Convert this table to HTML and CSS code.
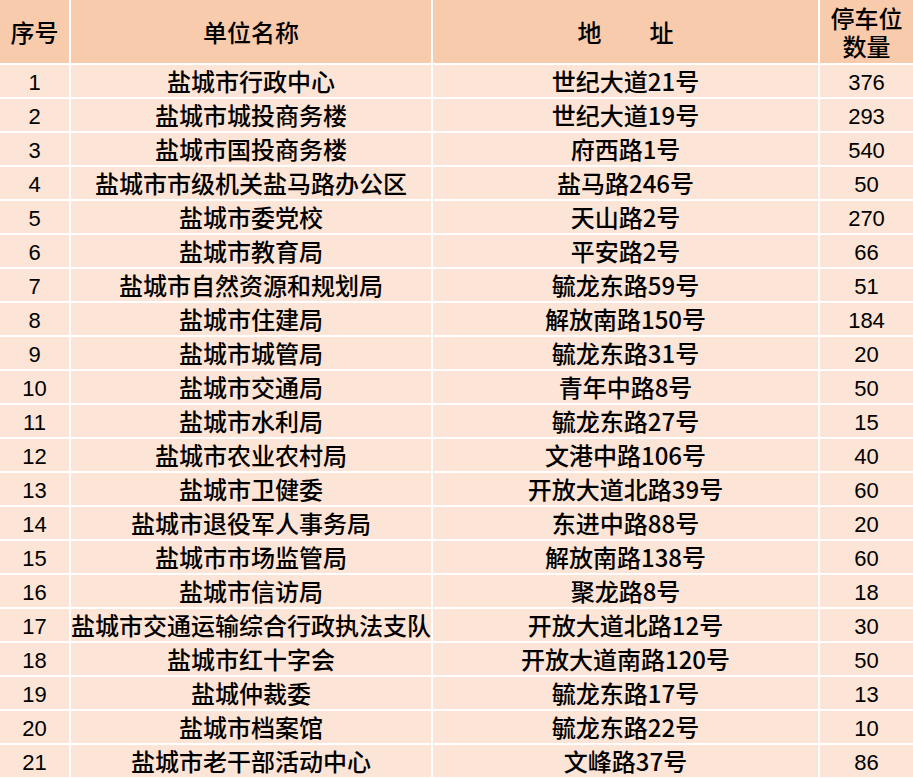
FILE: index.html
```html
<!DOCTYPE html>
<html lang="zh-CN">
<head>
<meta charset="utf-8">
<title>停车位</title>
<link rel="stylesheet" href="styles.css">
</head>
<body>
<table class="park">
<colgroup>
<col class="c1"><col class="c2"><col class="c3"><col class="c4">
</colgroup>
<thead>
<tr><th>序号</th><th>单位名称</th><th>地&emsp;&emsp;址</th><th class="two"><div>停车位</div><div>数量</div></th></tr>
</thead>
<tbody>
<tr><td class="n">1</td><td>盐城市行政中心</td><td>世纪大道21号</td><td class="n">376</td></tr>
<tr><td class="n">2</td><td>盐城市城投商务楼</td><td>世纪大道19号</td><td class="n">293</td></tr>
<tr><td class="n">3</td><td>盐城市国投商务楼</td><td>府西路1号</td><td class="n">540</td></tr>
<tr><td class="n">4</td><td>盐城市市级机关盐马路办公区</td><td>盐马路246号</td><td class="n">50</td></tr>
<tr><td class="n">5</td><td>盐城市委党校</td><td>天山路2号</td><td class="n">270</td></tr>
<tr><td class="n">6</td><td>盐城市教育局</td><td>平安路2号</td><td class="n">66</td></tr>
<tr><td class="n">7</td><td>盐城市自然资源和规划局</td><td>毓龙东路59号</td><td class="n">51</td></tr>
<tr><td class="n">8</td><td>盐城市住建局</td><td>解放南路150号</td><td class="n">184</td></tr>
<tr><td class="n">9</td><td>盐城市城管局</td><td>毓龙东路31号</td><td class="n">20</td></tr>
<tr><td class="n">10</td><td>盐城市交通局</td><td>青年中路8号</td><td class="n">50</td></tr>
<tr><td class="n">11</td><td>盐城市水利局</td><td>毓龙东路27号</td><td class="n">15</td></tr>
<tr><td class="n">12</td><td>盐城市农业农村局</td><td>文港中路106号</td><td class="n">40</td></tr>
<tr><td class="n">13</td><td>盐城市卫健委</td><td>开放大道北路39号</td><td class="n">60</td></tr>
<tr><td class="n">14</td><td>盐城市退役军人事务局</td><td>东进中路88号</td><td class="n">20</td></tr>
<tr><td class="n">15</td><td>盐城市市场监管局</td><td>解放南路138号</td><td class="n">60</td></tr>
<tr><td class="n">16</td><td>盐城市信访局</td><td>聚龙路8号</td><td class="n">18</td></tr>
<tr><td class="n">17</td><td>盐城市交通运输综合行政执法支队</td><td>开放大道北路12号</td><td class="n">30</td></tr>
<tr><td class="n">18</td><td>盐城市红十字会</td><td>开放大道南路120号</td><td class="n">50</td></tr>
<tr><td class="n">19</td><td>盐城仲裁委</td><td>毓龙东路17号</td><td class="n">13</td></tr>
<tr><td class="n">20</td><td>盐城市档案馆</td><td>毓龙东路22号</td><td class="n">10</td></tr>
<tr><td class="n">21</td><td>盐城市老干部活动中心</td><td>文峰路37号</td><td class="n">86</td></tr>
</tbody>
</table>
</body>
</html>
```
FILE: styles.css
```css
html, body {
  margin: 0;
  padding: 0;
  background: #ffffff;
}
.park {
  border-collapse: separate;
  border-spacing: 0;
  table-layout: fixed;
  width: 913px;
  font-family: "Noto Sans CJK SC", "Liberation Sans", sans-serif;
  font-size: 24px;
  font-weight: 500;
  color: #000000;
}
.c1 { width: 71px; }
.c2 { width: 362px; }
.c3 { width: 387px; }
.c4 { width: 93px; }
.park th,
.park td {
  padding: 0;
  text-align: center;
  vertical-align: middle;
  border-right: 2px solid #ffffff;
  border-bottom: 2px solid #ffffff;
  white-space: nowrap;
  line-height: 32px;
}
.park th:last-child,
.park td:last-child {
  border-right: none;
}
.park th {
  background: #f8cbad;
  font-weight: 500;
  height: 63px;
}
.park th.two {
  line-height: 28px;
}
.park td {
  background: #fce4d6;
  height: 32px;
}
.park td.n {
  font-family: "Liberation Sans", "Noto Sans CJK SC", sans-serif;
  font-size: 22px;
  font-weight: normal;
  line-height: 29px;
  padding-top: 3px;
  height: 29px;
}
.park tbody tr:last-child td {
  border-bottom: none;
}
```
